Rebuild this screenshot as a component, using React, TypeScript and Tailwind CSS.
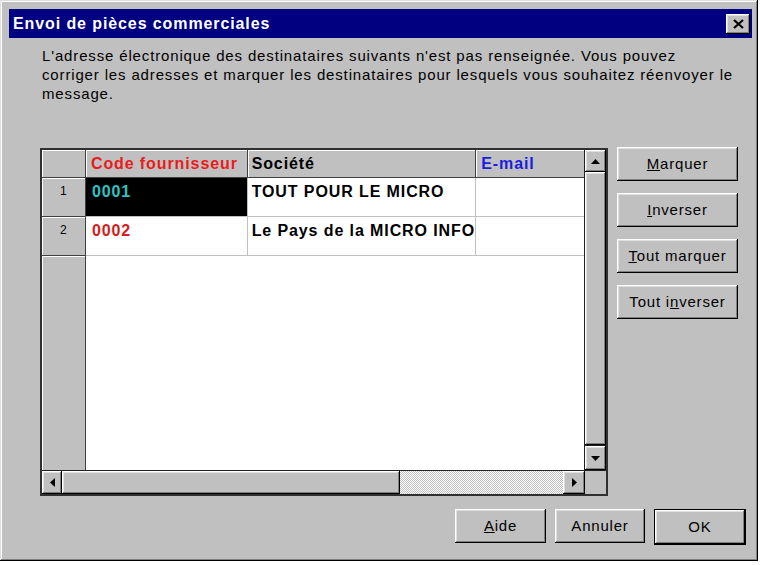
import type { ReactNode } from 'react'

// classic raised 3D bevel used by buttons and scrollbar parts
const raised =
  'shadow-[inset_-1px_-1px_0_#000,inset_1px_1px_0_#fff,inset_-2px_-2px_0_#808080,inset_2px_2px_0_#dfdfdf]'

const headCell = 'shadow-[inset_1px_1px_0_#fff] bg-[#c0c0c0] border-r border-b border-[#404040]'

interface Row {
  n: number
  code: string
  societe: string
  email: string
}

const rows: Row[] = [
  { n: 1, code: '0001', societe: 'TOUT POUR LE MICRO', email: '' },
  { n: 2, code: '0002', societe: 'Le Pays de la MICRO INFO', email: '' },
]

function Arrow({ dir }: { dir: 'up' | 'down' | 'left' | 'right' }) {
  const pts = {
    up: '4.5,0 9,5 0,5',
    down: '0,0 9,0 4.5,5',
    left: '5,0 5,9 0,4.5',
    right: '0,0 5,4.5 0,9',
  }[dir]
  const vertical = dir === 'up' || dir === 'down'
  return (
    <svg width={vertical ? 9 : 5} height={vertical ? 5 : 9}>
      <polygon points={pts} fill="#000" />
    </svg>
  )
}

function Btn({ children, className = '' }: { children: ReactNode; className?: string }) {
  return (
    <button
      className={`${raised} bg-[#c0c0c0] h-[34px] flex items-center justify-center text-[15px] tracking-[0.8px] text-black ${className}`}
    >
      {children}
    </button>
  )
}

function Grid() {
  return (
    <div className="w-[568px] h-[348px] border-2 border-[#303030] bg-white flex flex-col">
      <div className="flex h-[320px]">
        <div className="w-[543px] flex flex-col border-r border-[#202020]">
          <div className="flex h-[28px] font-bold text-[16px] tracking-[0.9px]">
            <div className={`${headCell} w-[44px]`} />
            <div className={`${headCell} w-[162px] flex items-center pl-[5px] text-[#e81c1c]`}>Code fournisseur</div>
            <div className={`${headCell} w-[229px] flex items-center pl-[4px] text-black`}>Société</div>
            <div className={`${headCell} w-[108px] flex items-center pl-[5px] text-[#1c1ce0] border-r-0`}>E-mail</div>
          </div>
          {rows.map(r => (
            <div key={r.n} className="flex h-[39px] font-bold text-[16px] tracking-[0.9px] leading-[18px]">
              <div className={`${headCell} w-[44px] text-center text-[12px] font-normal tracking-normal pt-[4px] text-black`}>
                {r.n}
              </div>
              <div
                className={`w-[162px] pl-[6px] pt-[5px] border-r border-b border-[#c0c0c0] ${
                  r.n === 1 ? 'bg-black text-[#2ec4c4]' : 'text-[#d41c1c]'
                }`}
              >
                {r.code}
              </div>
              <div className="w-[229px] pl-[4px] pt-[5px] border-r border-b border-[#c0c0c0] text-black whitespace-nowrap overflow-hidden">
                {r.societe}
              </div>
              <div className="w-[108px] pl-[5px] pt-[5px] border-b border-[#c0c0c0]">{r.email}</div>
            </div>
          ))}
          <div className="flex flex-1">
            <div className="w-[44px] bg-[#c0c0c0] border-r border-[#404040] shadow-[inset_1px_1px_0_#fff]" />
            <div className="flex-1 bg-white" />
          </div>
        </div>
        <div className="w-[21px] flex flex-col bg-[#c0c0c0]">
          <div className={`${raised} h-[22px] flex items-center justify-center`}>
            <Arrow dir="up" />
          </div>
          <div className={`${raised} flex-1`} />
          <div className={`${raised} h-[25px] flex items-center justify-center border-t border-[#202020]`}>
            <Arrow dir="down" />
          </div>
        </div>
      </div>
      <div className="flex h-[24px] border-t border-[#202020] bg-[#c0c0c0]">
        <div className="w-[543px] flex">
          <div className={`${raised} w-[20px] flex items-center justify-center`}>
            <Arrow dir="left" />
          </div>
          <div className={`${raised} w-[338px]`} />
          <div className="flex-1 bg-[image:repeating-conic-gradient(#c0c0c0_0_25%,#ffffff_0_50%)] bg-[length:2px_2px]" />
          <div className={`${raised} w-[22px] flex items-center justify-center`}>
            <Arrow dir="right" />
          </div>
        </div>
        <div className="w-[21px] bg-[#c0c0c0]" />
      </div>
    </div>
  )
}

export default function App() {
  return (
    <div className="w-[760px] h-[565px] bg-white font-['Liberation_Sans',Arial,sans-serif]">
      <div className="w-[758px] h-[561px] bg-[#c0c0c0] pl-[9px] pt-[9px] pr-[6px] flex flex-col shadow-[inset_-1px_-1px_0_#000,inset_1px_1px_0_#dfdfdf,inset_-2px_-2px_0_#808080,inset_2px_2px_0_#fff]">
        {/* title bar */}
        <div className="h-[29px] bg-[#000080] flex items-center justify-between pl-[4px] pr-[2px]">
          <span className="text-white font-bold text-[16px] tracking-[0.9px]">Envoi de pièces commerciales</span>
          <div className={`${raised} bg-[#c0c0c0] w-[24px] h-[20px] flex items-center justify-center`}>
            <svg width="11" height="10" viewBox="0 0 11 10">
              <path d="M1 1 L10 9 M10 1 L1 9" stroke="#000" strokeWidth="2.2" />
            </svg>
          </div>
        </div>

        <p className="mt-[8px] pl-[33px] text-[15px] leading-[19px] tracking-[0.85px] text-black whitespace-nowrap">
          L'adresse électronique des destinataires suivants n'est pas renseignée. Vous pouvez
          <br />
          corriger les adresses et marquer les destinataires pour lesquels vous souhaitez réenvoyer le
          <br />
          message.
        </p>

        <div className="mt-[45px] pl-[31px] flex">
          <Grid />
          <div className="ml-[9px] -mt-[1px] flex flex-col gap-[12px]">
            <Btn className="w-[121px]">
              <span><u>M</u>arquer</span>
            </Btn>
            <Btn className="w-[121px]">
              <span><u>I</u>nverser</span>
            </Btn>
            <Btn className="w-[121px]">
              <span><u>T</u>out marquer</span>
            </Btn>
            <Btn className="w-[121px]">
              <span>Tout i<u>n</u>verser</span>
            </Btn>
          </div>
        </div>

        <div className="mt-[13px] pr-[6px] flex justify-end gap-[9px]">
          <Btn className="w-[91px]">
            <span><u>A</u>ide</span>
          </Btn>
          <Btn className="w-[90px]">Annuler</Btn>
          <div className="border border-black">
            <Btn className="w-[90px] h-[32px]">OK</Btn>
          </div>
        </div>
      </div>
    </div>
  )
}
